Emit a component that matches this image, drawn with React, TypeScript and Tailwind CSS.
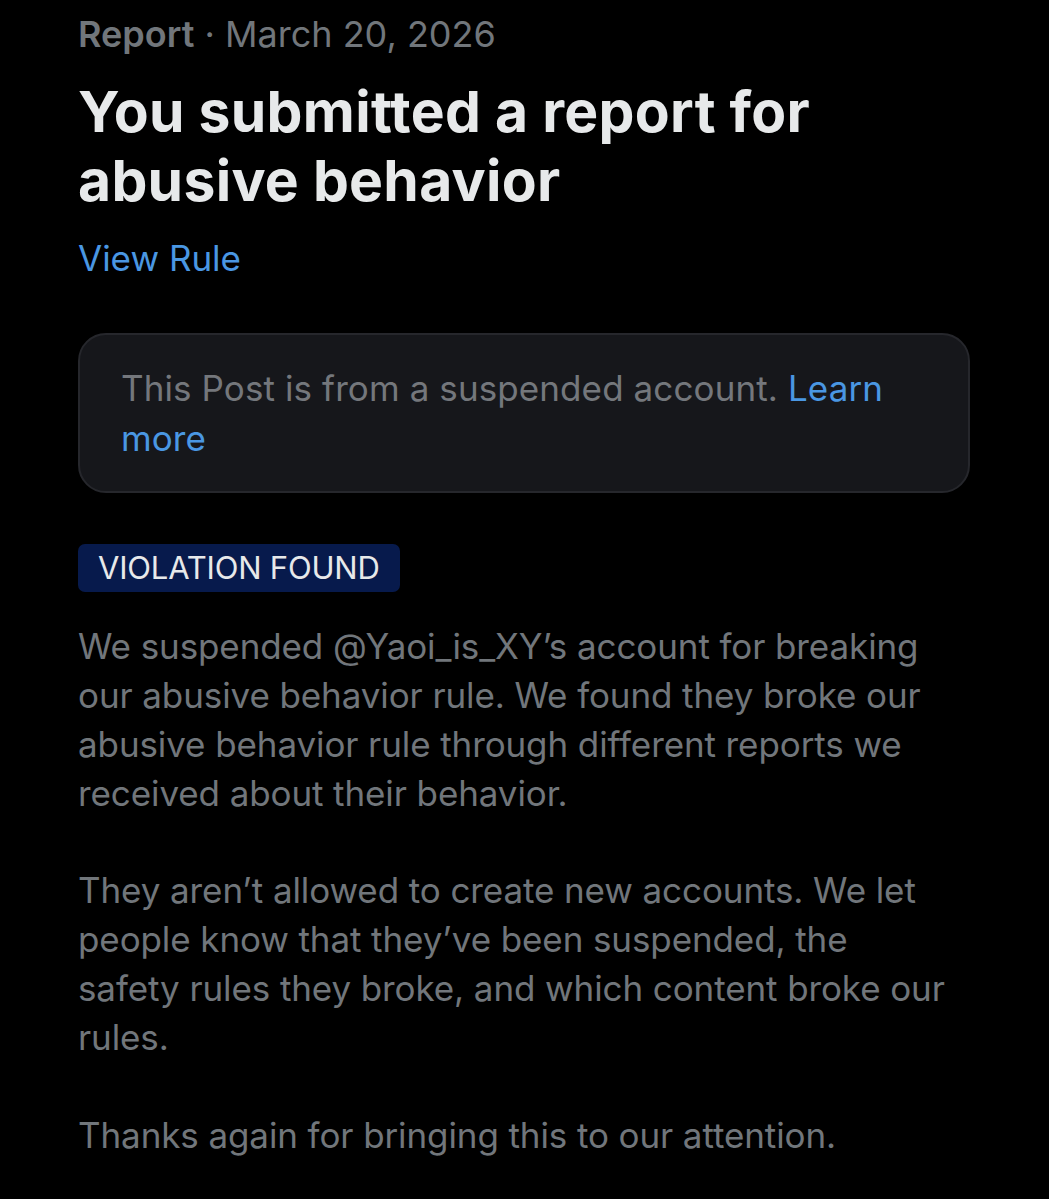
export default function App() {
  return (
    <div className="min-h-[1199px] w-full bg-black font-['Inter',sans-serif] text-[#71767b]">
      <div className="w-[892px] ml-[78px] pt-[10px] pb-10">
        <div className="text-[36px] leading-[48px] tracking-[0px]">
          <span className="font-semibold">Report</span>
          <span> · March 20, 2026</span>
        </div>
        <h1 className="mt-[19px] text-[57px] leading-[69px] font-bold tracking-[0.3px] text-[#e7e9ea]">
          You submitted a report for
          <br />
          abusive behavior
        </h1>
        <a className="mt-[20px] block text-[35px] leading-[46px] text-[#4a97e3]">View Rule</a>
        <div className="mt-[52px] h-[160px] rounded-[28px] border-2 border-[#26272c] bg-[#16171b] px-[41px] py-[28px]">
          <p className="text-[35px] leading-[50px] tracking-[0.1px] text-[#74777c]">
            This Post is from a suspended account. <span className="text-[#4a97e3]">Learn</span>
            <br />
            <span className="text-[#4a97e3]">more</span>
          </p>
        </div>
        <div className="mt-[51px] inline-block h-[48px] rounded-[7px] bg-[#071a4c] px-[20px] text-[31px] leading-[48px] tracking-[-0.2px] text-[#e7e9ea]">
          VIOLATION FOUND
        </div>
        <div className="mt-[30px] text-[35px] leading-[49px] tracking-[-0.1px]">
          <p>
            We suspended @Yaoi_is_XY’s account for breaking
            <br />
            our abusive behavior rule. We found they broke our
            <br />
            abusive behavior rule through different reports we
            <br />
            received about their behavior.
          </p>
          <p className="mt-[48px]">
            They aren’t allowed to create new accounts. We let
            <br />
            people know that they’ve been suspended, the
            <br />
            safety rules they broke, and which content broke our
            <br />
            rules.
          </p>
          <p className="mt-[49px]">Thanks again for bringing this to our attention.</p>
        </div>
      </div>
    </div>
  )
}
